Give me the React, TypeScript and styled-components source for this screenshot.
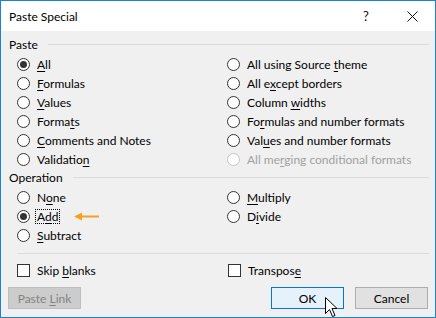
import React from 'react';
import styled, { createGlobalStyle } from 'styled-components';

const GlobalStyle = createGlobalStyle`
  html, body {
    margin: 0;
    padding: 0;
    background: #ffffff;
  }
`;

type Opt = { label: string; key: number; checked?: boolean; disabled?: boolean; focused?: boolean; arrow?: boolean };

const pasteLeft: Opt[] = [
  { label: 'All', key: 0, checked: true },
  { label: 'Formulas', key: 0 },
  { label: 'Values', key: 0 },
  { label: 'Formats', key: 5 },
  { label: 'Comments and Notes', key: 0 },
  { label: 'Validation', key: 9 },
];

const pasteRight: Opt[] = [
  { label: 'All using Source theme', key: 17 },
  { label: 'All except borders', key: 5 },
  { label: 'Column widths', key: 7 },
  { label: 'Formulas and number formats', key: 2 },
  { label: 'Values and number formats', key: 3 },
  { label: 'All merging conditional formats', key: 6, disabled: true },
];

const opLeft: Opt[] = [
  { label: 'None', key: 1 },
  { label: 'Add', key: 1, checked: true, focused: true, arrow: true },
  { label: 'Subtract', key: 0 },
];

const opRight: Opt[] = [
  { label: 'Multiply', key: 0 },
  { label: 'Divide', key: 1 },
];

const AccessLabel: React.FC<{ text: string; at: number }> = ({ text, at }) => (
  <>
    {text.slice(0, at)}
    <Key>{text[at]}</Key>
    {text.slice(at + 1)}
  </>
);

const OrangeArrow = () => (
  <ArrowSvg width="25" height="9" viewBox="0 0 25 9">
    <line x1="5" y1="4.5" x2="25" y2="4.5" stroke="#f5a01e" strokeWidth="2" />
    <polygon points="0,4.5 8,0.5 8,8.5" fill="#f5a01e" />
  </ArrowSvg>
);

const OptionList: React.FC<{ items: Opt[] }> = ({ items }) => (
  <Column>
    {items.map((o) => (
      <Option key={o.label} $disabled={o.disabled}>
        <Radio $checked={o.checked} $disabled={o.disabled} />
        <OptionText $focused={o.focused}>
          <AccessLabel text={o.label} at={o.key} />
        </OptionText>
        {o.arrow && <OrangeArrow />}
      </Option>
    ))}
  </Column>
);

export default function App() {
  return (
    <>
      <GlobalStyle />
      <Window>
        <TitleBar>
          <Title>Paste Special</Title>
          <TitleButton>?</TitleButton>
          <TitleButton>
            <svg width="11" height="11" viewBox="0 0 11 11">
              <path d="M0.5 0.5 L10.5 10.5 M10.5 0.5 L0.5 10.5" stroke="#111" strokeWidth="1" />
            </svg>
          </TitleButton>
        </TitleBar>

        <Body>
          <SectionHeader>
            <span>Paste</span>
            <Rule />
          </SectionHeader>
          <Columns>
            <OptionList items={pasteLeft} />
            <OptionList items={pasteRight} />
          </Columns>

          <SectionHeader>
            <span>Operation</span>
            <Rule />
          </SectionHeader>
          <Columns>
            <OptionList items={opLeft} />
            <OptionList items={opRight} />
          </Columns>

          <Divider />

          <CheckRow>
            <CheckItem>
              <CheckBox />
              <span>Skip <Key>b</Key>lanks</span>
            </CheckItem>
            <CheckItem>
              <CheckBox />
              <span>Transpos<Key>e</Key></span>
            </CheckItem>
          </CheckRow>

          <ButtonRow>
            <Button $variant="disabled">
              <span>Paste <Key>L</Key>ink</span>
            </Button>
            <Spacer />
            <Button $variant="default">OK</Button>
            <Button>Cancel</Button>
          </ButtonRow>
        </Body>

        <Cursor width="13" height="21" viewBox="0 0 13 21">
          <path
            d="M0.5 0.5 L0.5 16.5 L4.5 12.5 L7.5 19.5 L10 18.5 L7 11.5 L12 11.5 Z"
            fill="#fff"
            stroke="#000"
            strokeWidth="1"
            strokeLinejoin="miter"
          />
        </Cursor>
      </Window>
    </>
  );
}

const Window = styled.div`
  position: relative;
  width: 436px;
  height: 318px;
  box-sizing: border-box;
  border: 1px solid #1883d7;
  background: #f0f0f0;
  display: flex;
  flex-direction: column;
  font-family: 'Segoe UI', Lato, 'Noto Sans', sans-serif;
  font-size: 12px;
  color: #000;
  overflow: hidden;
`;

const TitleBar = styled.div`
  height: 30px;
  background: #ffffff;
  display: flex;
  align-items: center;
  padding-left: 8px;
`;

const Title = styled.div`
  flex: 1;
  font-size: 12px;
  color: #000;
`;

const TitleButton = styled.div`
  width: 46px;
  height: 30px;
  display: flex;
  align-items: center;
  justify-content: center;
  font-size: 13px;
  color: #111;
`;

const Body = styled.div`
  flex: 1;
  display: flex;
  flex-direction: column;
  padding: 6px 6px 0 8px;
`;

const SectionHeader = styled.div`
  display: flex;
  align-items: center;
  gap: 10px;
  height: 15px;
`;

const Rule = styled.div`
  flex: 1;
  height: 1px;
  background: #dcdcdc;
`;

const Columns = styled.div`
  display: grid;
  grid-template-columns: 210px 1fr;
  padding-left: 8px;
  margin: 3px 0 1px;
`;

const Column = styled.div`
  display: flex;
  flex-direction: column;
`;

const Option = styled.div<{ $disabled?: boolean }>`
  display: flex;
  align-items: center;
  height: 19px;
  gap: 7px;
  color: ${(p) => (p.$disabled ? '#a0a0a0' : '#000')};
  white-space: nowrap;
`;

const Radio = styled.span<{ $checked?: boolean; $disabled?: boolean }>`
  position: relative;
  width: 13px;
  height: 13px;
  box-sizing: border-box;
  border-radius: 50%;
  border: 1px solid ${(p) => (p.$disabled ? '#c4c4c4' : '#333')};
  background: #fff;
  flex-shrink: 0;

  &::after {
    content: '';
    display: ${(p) => (p.$checked ? 'block' : 'none')};
    position: absolute;
    left: 2px;
    top: 2px;
    width: 7px;
    height: 7px;
    border-radius: 50%;
    background: #333;
  }
`;

const OptionText = styled.span<{ $focused?: boolean }>`
  margin-left: ${(p) => (p.$focused ? '-2px' : '0')};
  padding: ${(p) => (p.$focused ? '0 1px' : '0')};
  border: ${(p) => (p.$focused ? '1px dotted #000' : 'none')};
  line-height: 13px;
`;

const Key = styled.u`
  text-decoration: underline;
  text-underline-offset: 2px;
`;

const ArrowSvg = styled.svg`
  margin-left: 7px;
  flex-shrink: 0;
`;

const Divider = styled.div`
  height: 1px;
  background: #dcdcdc;
  margin: 7px 0 0 8px;
`;

const CheckRow = styled.div`
  display: grid;
  grid-template-columns: 211px 1fr;
  padding-left: 8px;
  margin-top: 7px;
  height: 18px;
`;

const CheckItem = styled.div`
  display: flex;
  align-items: center;
  gap: 7px;
`;

const CheckBox = styled.span`
  width: 13px;
  height: 13px;
  box-sizing: border-box;
  border: 1px solid #333;
  background: #fff;
`;

const ButtonRow = styled.div`
  display: flex;
  gap: 11px;
  margin: 8px 0 0 -1px;
  padding-right: 1px;
`;

const Spacer = styled.div`
  flex: 1;
`;

const Button = styled.div<{ $variant?: 'default' | 'disabled' }>`
  width: 73px;
  height: 22px;
  box-sizing: border-box;
  display: flex;
  align-items: center;
  justify-content: center;
  font-size: 12px;
  border: 1px solid
    ${(p) => (p.$variant === 'default' ? '#0078d7' : p.$variant === 'disabled' ? '#bfbfbf' : '#adadad')};
  background: ${(p) => (p.$variant === 'default' ? '#e5f1fb' : p.$variant === 'disabled' ? '#cccccc' : '#e1e1e1')};
  color: ${(p) => (p.$variant === 'disabled' ? '#838383' : '#000')};
`;

const Cursor = styled.svg`
  position: absolute;
  left: 324px;
  top: 296px;
`;
